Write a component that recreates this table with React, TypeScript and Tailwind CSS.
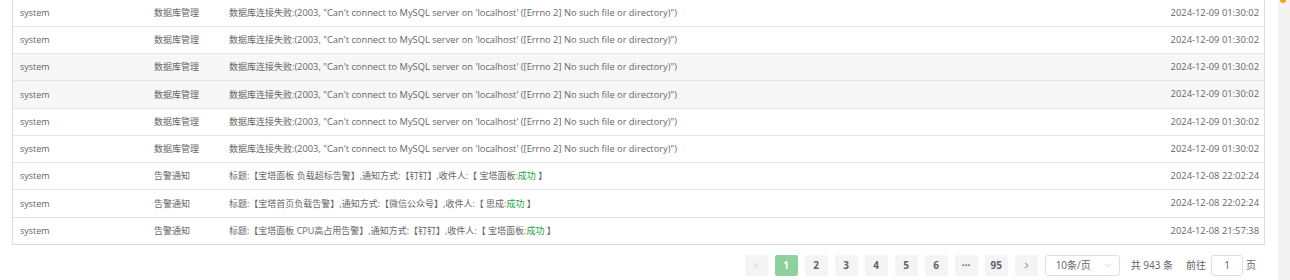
import React from "react";

const dbMsg = (
  <>
    数据库连接失败:
    <span className="text-[9.3px]">
      (2003, "Can't connect to MySQL server on 'localhost' ([Errno 2] No such file or directory)")
    </span>
  </>
);

type Row = {
  user: string;
  type: string;
  msg: React.ReactNode;
  time: string;
  h: string;
  bg: string;
};

const ok = <span className="text-[#20a53a]">成功</span>;

const rows: Row[] = [
  { user: "system", type: "数据库管理", msg: dbMsg, time: "2024-12-09 01:30:02", h: "h-[27px]", bg: "bg-white" },
  { user: "system", type: "数据库管理", msg: dbMsg, time: "2024-12-09 01:30:02", h: "h-[27px]", bg: "bg-white" },
  { user: "system", type: "数据库管理", msg: dbMsg, time: "2024-12-09 01:30:02", h: "h-[27px]", bg: "bg-[#f7f7f7]" },
  { user: "system", type: "数据库管理", msg: dbMsg, time: "2024-12-09 01:30:02", h: "h-[28px]", bg: "bg-[#f7f7f7]" },
  { user: "system", type: "数据库管理", msg: dbMsg, time: "2024-12-09 01:30:02", h: "h-[27px]", bg: "bg-white" },
  { user: "system", type: "数据库管理", msg: dbMsg, time: "2024-12-09 01:30:02", h: "h-[27px]", bg: "bg-white" },
  {
    user: "system",
    type: "告警通知",
    msg: <>标题:【宝塔面板 负载超标告警】,通知方式:【钉钉】,收件人:【 宝塔面板:{ok} 】</>,
    time: "2024-12-08 22:02:24",
    h: "h-[27px]",
    bg: "bg-white",
  },
  {
    user: "system",
    type: "告警通知",
    msg: <>标题:【宝塔首页负载告警】,通知方式:【微信公众号】,收件人:【 思成:{ok} 】</>,
    time: "2024-12-08 22:02:24",
    h: "h-[28px]",
    bg: "bg-white",
  },
  {
    user: "system",
    type: "告警通知",
    msg: <>标题:【宝塔面板 CPU高占用告警】,通知方式:【钉钉】,收件人:【 宝塔面板:{ok} 】</>,
    time: "2024-12-08 21:57:38",
    h: "h-[26px]",
    bg: "bg-white",
  },
];

const pages = ["1", "2", "3", "4", "5", "6", "···", "95"];

export default function App() {
  return (
    <div className="flex min-h-[280px] bg-white font-['Open_Sans','Noto_Sans_CJK_SC',sans-serif] text-[9px] text-[#666]">
      <div className="min-w-0 flex-1 pl-[12px] pr-[13px]">
        {/* log table */}
        <div className="border-x border-b border-[#dedede]">
          {rows.map((r, i) => (
            <div
              key={i}
              className={`flex items-center border-b border-[#e4e4e4] last:border-b-0 ${r.h} ${r.bg}`}
            >
              <div className="w-[134px] shrink-0 pl-[7px]">{r.user}</div>
              <div className="w-[75px] shrink-0 pl-[7px]">{r.type}</div>
              <div className="min-w-0 flex-1 whitespace-nowrap pl-[7px]">{r.msg}</div>
              <div className="shrink-0 pr-[5px] text-right text-[9.4px]">{r.time}</div>
            </div>
          ))}
        </div>

        {/* pagination */}
        <div className="mt-[10px] flex items-center justify-end pr-[9px] text-[10px] text-[#606266]">
          <div className="flex h-[21px] w-[23px] items-center justify-center rounded-[2px] bg-[#f4f4f5] text-[#c0c4cc]">
            <svg width="7" height="7" viewBox="0 0 8 8" fill="none" stroke="currentColor" strokeWidth="1.1">
              <path d="M5.5 1 2.5 4l3 3" />
            </svg>
          </div>
          {pages.map((p) => (
            <div
              key={p}
              className={`ml-[7px] flex h-[21px] w-[23px] items-center justify-center rounded-[2px] font-bold ${
                p === "1" ? "bg-[#8fd19e] text-white" : "bg-[#f4f4f5]"
              }`}
            >
              {p}
            </div>
          ))}
          <div className="ml-[7px] flex h-[21px] w-[23px] items-center justify-center rounded-[2px] bg-[#f4f4f5] text-[#606266]">
            <svg width="7" height="7" viewBox="0 0 8 8" fill="none" stroke="currentColor" strokeWidth="1.1">
              <path d="M2.5 1l3 3-3 3" />
            </svg>
          </div>
          <div className="ml-[7px] flex h-[21px] w-[75px] items-center justify-between rounded-[3px] border border-[#dcdfe6] pl-[10px] pr-[8px]">
            <span>10条/页</span>
            <svg width="7" height="7" viewBox="0 0 8 8" fill="none" stroke="#c0c4cc" strokeWidth="0.9">
              <path d="M1 2.5l3 3 3-3" />
            </svg>
          </div>
          <span className="ml-[11px] whitespace-nowrap">共 943 条</span>
          <span className="ml-[13px]">前往</span>
          <div className="ml-[5px] flex h-[21px] w-[32px] items-center justify-center rounded-[3px] border border-[#dcdfe6]">
            1
          </div>
          <span className="ml-[3px]">页</span>
        </div>
      </div>

      {/* right gutter */}
      <div className="relative w-[12px] shrink-0 bg-[#f3f3f3]">
        <div className="absolute left-[2px] top-0 h-[3px] w-[6px] rounded-b-full bg-[#f7a01c]" />
      </div>
    </div>
  );
}
